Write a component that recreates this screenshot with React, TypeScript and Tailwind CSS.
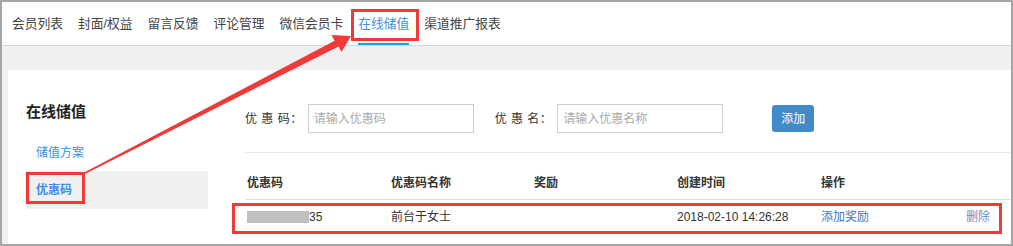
import React from "react";

const tabs = ["会员列表", "封面/权益", "留言反馈", "评论管理", "微信会员卡", "在线储值", "渠道推广报表"];

const columns = ["优惠码", "优惠码名称", "奖励", "创建时间", "操作"];

export default function App() {
  return (
    <div className="relative w-[1013px] h-[246px] overflow-hidden font-['Liberation_Sans','Noto_Sans_CJK_SC',sans-serif] text-[#333]">
      <div className="h-full border-2 border-[#a6a6a6] bg-[#f0f0f0] flex flex-col">
        {/* Top tabs */}
        <nav className="h-[44px] shrink-0 bg-white border-b border-[#d6d6d6] flex items-stretch pl-[10px] gap-[15px] text-[12.75px] text-[#444]">
          {tabs.map((tab) => (
            <div
              key={tab}
              className={
                tab === "在线储值"
                  ? "flex items-center pt-[2px] border-b-2 border-[#1c9be6] text-[#3e92e0]"
                  : "flex items-center pt-[2px] border-b-2 border-transparent"
              }
            >
              {tab}
            </div>
          ))}
        </nav>

        {/* Panel */}
        <div className="mt-[24px] ml-[6px] flex-1 bg-white flex">
          {/* Sidebar */}
          <aside className="ml-[18px] w-[182px] shrink-0">
            <h2 className="mt-[31px] h-[22px] leading-[22px] text-[15px] font-bold text-[#222]">在线储值</h2>
            <div className="mt-[11px] h-[37px] flex items-center pl-[10px] text-[12px] text-[#3a8ee0]">储值方案</div>
            <div className="h-[38px] flex items-center pl-[10px] bg-[#f0f0f0] text-[12px] font-bold text-[#3a8ee0]">优惠码</div>
          </aside>

          {/* Main */}
          <main className="ml-[37px] flex-1">
            <div className="mt-[34px] h-[29px] flex items-center text-[12px]">
              <span className="tracking-[0.5px] text-[#333]">优 惠 码：</span>
              <div className="ml-[5px] w-[166px] h-[29px] border border-[#cfcfcf] flex items-center pl-[5px] text-[#aaa]">
                请输入优惠码
              </div>
              <span className="ml-[21px] tracking-[0.5px] text-[#333]">优 惠 名：</span>
              <div className="ml-[5px] w-[166px] h-[29px] border border-[#cfcfcf] flex items-center pl-[5px] text-[#aaa]">
                请输入优惠名称
              </div>
              <button className="ml-[49px] w-[42px] h-[27px] rounded-[3px] bg-[#428bca] text-white text-[12px] flex items-center justify-center">
                添加
              </button>
            </div>

            <div className="mt-[19px] border-t border-[#e8e8e8]" />

            {/* Table */}
            <div className="mt-[18px] h-[29px] border-b border-[#dedede] grid grid-cols-[144px_143px_143px_144px_1fr] text-[12px] font-bold text-[#333]">
              {columns.map((c) => (
                <div key={c} className="pl-[2px] leading-[24px]">
                  {c}
                </div>
              ))}
            </div>
            <div className="h-[34px] grid grid-cols-[144px_143px_143px_144px_1fr] items-center text-[12px] text-[#333]">
              <div className="pl-[2px] flex items-center">
                <span className="inline-block w-[62px] h-[12px] bg-[#c0c0c0]" />
                <span>35</span>
              </div>
              <div className="pl-[2px]">前台于女士</div>
              <div className="pl-[2px]" />
              <div className="pl-[2px]">2018-02-10 14:26:28</div>
              <div className="pl-[2px] pr-[21px] flex justify-between">
                <span className="text-[#4577b8]">添加奖励</span>
                <span className="text-[#6b8ec6]">删除</span>
              </div>
            </div>
          </main>
        </div>
      </div>

      {/* Annotations */}
      <div className="absolute left-[351px] top-[9px] w-[68px] h-[32px] border-[3px] border-[#f03a3a]" />
      <div className="absolute left-[26px] top-[172px] w-[59px] h-[32px] border-[3px] border-[#f03a3a]" />
      <div className="absolute left-[232px] top-[203px] w-[770px] h-[31px] border-[3px] border-[#f03a3a]" />
      <svg className="absolute left-0 top-0 pointer-events-none" width="1013" height="246">
        <polygon
          fill="#f03a3a"
          points="84.6,172.3 334.6,40.8 331.5,35 351,36 341.5,52 338.6,46.4 85.4,173.7"
        />
      </svg>
    </div>
  );
}
